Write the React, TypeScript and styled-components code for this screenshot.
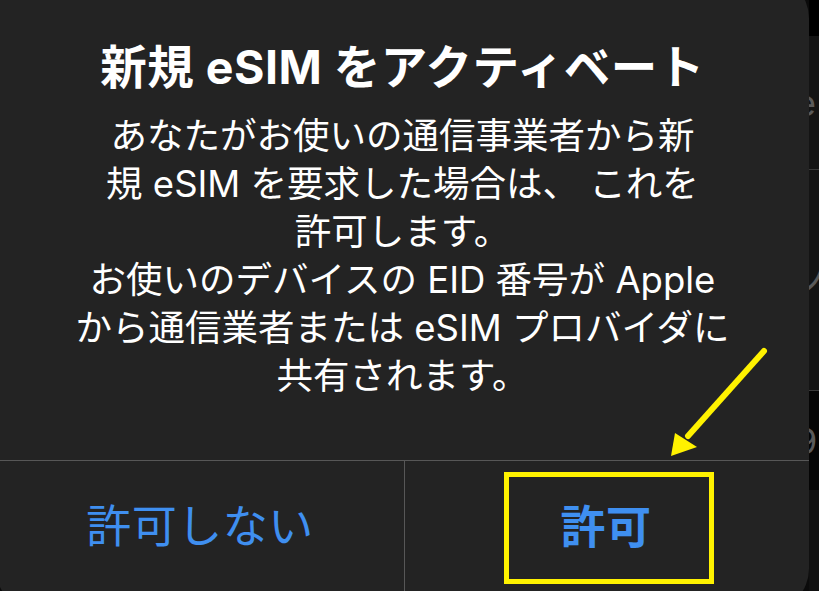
import React, { ReactElement } from 'react';
import styled, { createGlobalStyle } from 'styled-components';

const colors = {
  PAGE: '#0b0b0b',
  CARD: '#232323',
  LINE: '#575757',
  TEXT: '#ffffff',
  BLUE: '#3f8ff0',
  YELLOW: '#fff200',
};

const GlobalStyle = createGlobalStyle`
  html, body {
    margin: 0;
    padding: 0;
    background: ${colors.PAGE};
  }
  body {
    font-family: Inter, "Noto Sans CJK JP", sans-serif;
    -webkit-font-smoothing: antialiased;
  }
`;

const Page = styled.div`
  position: relative;
  width: 819px;
  height: 591px;
  overflow: hidden;
  display: flex;
  background: ${colors.PAGE};
`;

const Card = styled.div`
  flex: 0 0 813px;
  margin: -24px 0 -20px -4px;
  background: ${colors.CARD};
  border-radius: 42px;
  display: flex;
  flex-direction: column;
`;

const Content = styled.div`
  padding: 63px 20px 60px;
  display: flex;
  flex-direction: column;
  align-items: center;
  text-align: center;
  color: ${colors.TEXT};
`;

const Title = styled.h1`
  margin: 0 0 17px;
  font-size: 46.5px;
  line-height: 56px;
  font-weight: 700;
  letter-spacing: 0.5px;
`;

const Message = styled.p`
  margin: 0;
  font-size: 36.5px;
  line-height: 48px;
  font-weight: 400;
`;

const Actions = styled.div`
  flex: 1;
  display: grid;
  grid-template-columns: 409px 1fr;
  border-top: 1px solid ${colors.LINE};
`;

const Action = styled.div<{ $bold?: boolean; $divider?: boolean }>`
  display: flex;
  align-items: center;
  justify-content: center;
  padding-bottom: 26px;
  color: ${colors.BLUE};
  font-size: 45px;
  font-weight: ${(p) => (p.$bold ? 700 : 400)};
  letter-spacing: 0.5px;
  border-right: ${(p) => (p.$divider ? `1px solid ${colors.LINE}` : 'none')};
`;

const Highlight = styled.div`
  box-sizing: border-box;
  width: 210px;
  height: 112px;
  margin-top: 9px;
  margin-left: 4px;
  border: 5px solid ${colors.YELLOW};
  display: flex;
  align-items: center;
  justify-content: center;
  padding: 0 6px 6px 0;
`;

const Side = styled.div`
  flex: 1;
  display: flex;
  flex-direction: column;
  color: #5a5a5a;
  font-size: 36px;
  line-height: 36px;
  overflow: hidden;
`;

const SideBlock = styled.div<{ $bg: string; $h: number; $line?: boolean }>`
  height: ${(p) => p.$h}px;
  background: ${(p) => p.$bg};
  border-bottom: ${(p) => (p.$line ? '1px solid #3a3a3a' : 'none')};
  white-space: nowrap;
  display: flex;
  align-items: center;
  text-indent: -14px;
`;

const Arrow = styled.svg`
  position: absolute;
  left: 640px;
  top: 330px;
  pointer-events: none;
`;

const App = (): ReactElement => {
  return (
    <>
      <GlobalStyle />
      <Page>
        <Card>
          <Content>
            <Title>新規 eSIM をアクティベート</Title>
            <Message>
              あなたがお使いの通信事業者から新
              <br />規 eSIM を要求した場合は、 これを
              <br />許可します。
              <br />お使いのデバイスの EID 番号が Apple
              <br />から通信業者または eSIM プロバイダに
              <br />共有されます。
            </Message>
          </Content>
          <Actions>
            <Action $divider>許可しない</Action>
            <Action $bold>
              <Highlight>許可</Highlight>
            </Action>
          </Actions>
        </Card>
        <Side>
          <SideBlock $bg="#000" $h={36} />
          <SideBlock $bg="#141414" $h={134} $line>
            e
          </SideBlock>
          <SideBlock $bg="#141414" $h={220} $line>
            ノ
          </SideBlock>
          <SideBlock $bg="#050505" $h={100}>
            9
          </SideBlock>
          <SideBlock $bg="#101010" $h={101} />
        </Side>
        <Arrow width="140" height="140" viewBox="0 0 140 140">
          <line x1="124" y1="21" x2="48" y2="106" stroke={colors.YELLOW} strokeWidth="6" strokeLinecap="round" />
          <polygon points="31,126 35,103 57,117" fill={colors.YELLOW} />
        </Arrow>
      </Page>
    </>
  );
};

export default App;
